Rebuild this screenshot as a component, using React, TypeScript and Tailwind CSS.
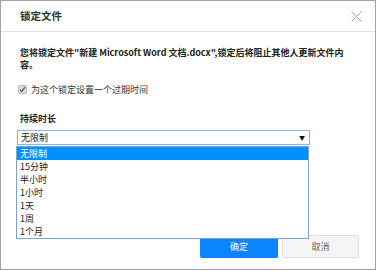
import React from "react";

const items = ["无限制", "15分钟", "半小时", "1小时", "1天", "1周", "1个月"];

export default function App() {
  return (
    <div
      className="w-[377px] h-[271px] bg-white"
      style={{ fontFamily: '"Noto Sans CJK SC", "Noto Sans", sans-serif' }}
    >
      <div className="relative w-[376px] h-[270px] border border-[#a3a3a3] bg-white flex flex-col">
        {/* title bar */}
        <div className="h-[31px] shrink-0 border-b border-[#e3e3e3] flex items-center justify-between pl-[19px] pr-[12px]">
          <span className="text-[10.5px] font-bold text-[#333] leading-none">锁定文件</span>
          <svg width="11" height="11" viewBox="0 0 11 11" className="mr-[1px]">
            <path d="M0.5 0.5 L10.5 10.5 M10.5 0.5 L0.5 10.5" stroke="#a8a8a8" strokeWidth="1" fill="none" />
          </svg>
        </div>

        {/* body */}
        <div className="flex-1 flex flex-col px-[19px]">
          <p className="mt-[15px] text-[9px] leading-[12px] font-bold text-[#222] w-[338px]">
            您将锁定文件"新建 Microsoft Word 文档.docx",锁定后将阻止其他人更新文件内容。
          </p>

          <div className="mt-[12px] flex items-center h-[12px] -ml-[2px]">
            <span className="w-[9px] h-[9px] bg-[#dcdcdc] border border-[#bdbdbd] rounded-[1px] flex items-center justify-center">
              <svg width="7" height="7" viewBox="0 0 7 7">
                <path d="M1 3.6 L2.8 5.4 L6 1.2" stroke="#555" strokeWidth="1.3" fill="none" />
              </svg>
            </span>
            <span className="ml-[4px] text-[9px] leading-none text-[#333]">为这个锁定设置一个过期时间</span>
          </div>

          <div className="mt-[19px] text-[9px] leading-none font-bold text-[#222]">持续时长</div>

          <div className="mt-[7px] -ml-[3px] w-[293px] h-[15px] border border-[#86b7e8] flex items-center justify-between pl-[3px] pr-[4px]">
            <span className="text-[9px] leading-none text-[#222]">无限制</span>
            <span className="text-[6px] leading-none text-[#111]">▼</span>
          </div>

          <div className="mt-auto mb-[11px] flex justify-end gap-[4px] -mr-[3px]">
            <button className="w-[78px] h-[23px] rounded-[2px] bg-[#0a84ff] text-white text-[9px]">确定</button>
            <button className="w-[77px] h-[23px] rounded-[2px] bg-[#f5f5f5] border border-[#e0e0e0] text-[#666] text-[9px]">取消</button>
          </div>
        </div>

        {/* dropdown overlay */}
        <div className="absolute left-[15px] top-[145px] w-[293px] border border-[#7aa3d4] bg-white">
          {items.map((it, i) => (
            <div
              key={it}
              className={
                i === 0
                  ? "h-[13px] pl-[3px] flex items-center text-[9px] leading-none bg-[#0091ff] text-white"
                  : "h-[13px] pl-[3px] flex items-center text-[9px] leading-none text-[#222]"
              }
            >
              {it}
            </div>
          ))}
        </div>
      </div>
    </div>
  );
}
